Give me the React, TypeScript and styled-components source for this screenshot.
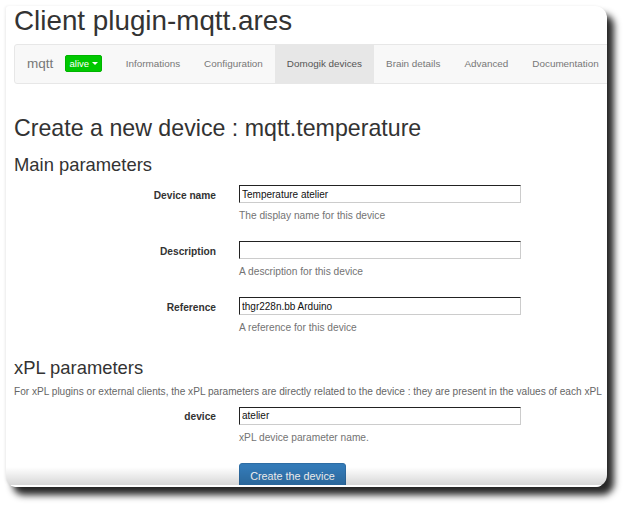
import React from 'react';
import styled, { createGlobalStyle } from 'styled-components';

const GlobalStyle = createGlobalStyle`
  html, body {
    margin: 0;
    padding: 0;
    background: #fff;
    font-family: "Liberation Sans", Arial, sans-serif;
  }
`;

const Page = styled.div`
  width: 630px;
  height: 511px;
  padding: 6px 0 0 6px;
  box-sizing: border-box;
`;

const Frame = styled.div`
  position: relative;
  width: 601px;
  height: 481px;
  background: #fff;
  border-radius: 3px 12px 12px 10px;
  box-shadow: 7px 8px 7px rgba(0, 0, 0, 0.85), -1px 0 3px rgba(0, 0, 0, 0.07);
  overflow: hidden;
  &::after {
    content: '';
    position: absolute;
    left: 0;
    right: 0;
    bottom: 0;
    height: 20px;
    background: linear-gradient(to bottom, rgba(0, 0, 0, 0) 0%, rgba(0, 0, 0, 0.16) 92%, #fff 92%);
    pointer-events: none;
  }
`;

const Content = styled.div`
  width: 640px;
  padding-left: 8px;
  color: #333;
`;

const Title = styled.h1`
  margin: 0;
  font-size: 27.8px;
  font-weight: 400;
  line-height: 1.1;
  color: #333;
`;

const Navbar = styled.nav`
  margin-top: 7px;
  height: 38px;
  display: flex;
  align-items: stretch;
  background: #f8f8f8;
  border: 1px solid #e7e7e7;
  border-radius: 3px;
`;

const Brand = styled.div`
  display: flex;
  align-items: center;
  padding: 0 12px;
  font-size: 13.5px;
  color: #777;
`;

const StatusButton = styled.div`
  align-self: center;
  display: flex;
  align-items: center;
  justify-content: center;
  gap: 3px;
  width: 37px;
  height: 17px;
  box-sizing: border-box;
  margin-right: 11.5px;
  background: #00c800;
  border: 1px solid #00b400;
  border-radius: 2px;
  color: #fff;
  font-size: 9.5px;
`;

const Caret = styled.span`
  width: 0;
  height: 0;
  border-left: 3px solid transparent;
  border-right: 3px solid transparent;
  border-top: 3px solid #fff;
`;

const NavItem = styled.div<{ $active?: boolean }>`
  display: flex;
  align-items: center;
  padding: 0 12px;
  font-size: 9.9px;
  color: ${p => (p.$active ? '#555' : '#777')};
  background: ${p => (p.$active ? '#e7e7e7' : 'transparent')};
  white-space: nowrap;
`;

const PageHeading = styled.h2`
  margin: 32px 0 0;
  font-size: 23.2px;
  font-weight: 400;
  line-height: 1.1;
`;

const Section = styled.h3<{ $top: number }>`
  margin: ${p => p.$top}px 0 0;
  font-size: 18.4px;
  font-weight: 400;
  line-height: 1.1;
`;

const Intro = styled.p`
  margin: 5px 0 0;
  font-size: 10.1px;
  line-height: 15px;
  color: #666;
  white-space: nowrap;
`;

const Row = styled.div<{ $top: number }>`
  display: grid;
  grid-template-columns: 202px 282px;
  column-gap: 23px;
  margin-top: ${p => p.$top}px;
`;

const Label = styled.label`
  grid-row: 1;
  align-self: center;
  padding-top: 2px;
  text-align: right;
  font-size: 10.2px;
  font-weight: 700;
  color: #333;
`;

const Input = styled.input`
  grid-column: 2;
  height: 18px;
  box-sizing: border-box;
  margin: 0;
  padding: 0 2px;
  border: 1px solid;
  border-color: #222 #ccc #ccc #222;
  font-family: "Liberation Sans", Arial, sans-serif;
  font-size: 10px;
  color: #111;
  background: #fff;
  outline: none;
`;

const Help = styled.div`
  grid-column: 2;
  margin-top: 5px;
  font-size: 10.2px;
  line-height: 15px;
  color: #737373;
`;

const Actions = styled.div`
  margin: 18px 0 0 225px;
`;

const PrimaryButton = styled.button`
  width: 107px;
  height: 26px;
  padding: 0;
  background: #337ab7;
  border: 1px solid #2e6da4;
  border-radius: 3px;
  color: #fff;
  font-family: "Liberation Sans", Arial, sans-serif;
  font-size: 10.8px;
`;

const navItems = ['Informations', 'Configuration', 'Domogik devices', 'Brain details', 'Advanced', 'Documentation'];

const mainFields = [
  { label: 'Device name', value: 'Temperature atelier', help: 'The display name for this device' },
  { label: 'Description', value: '', help: 'A description for this device' },
  { label: 'Reference', value: 'thgr228n.bb Arduino', help: 'A reference for this device' },
];

export default function App() {
  return (
    <Page>
      <GlobalStyle />
      <Frame>
        <Content>
          <Title>Client plugin-mqtt.ares</Title>
          <Navbar>
            <Brand>mqtt</Brand>
            <StatusButton>alive <Caret /></StatusButton>
            {navItems.map(item => (
              <NavItem key={item} $active={item === 'Domogik devices'}>{item}</NavItem>
            ))}
          </Navbar>

          <PageHeading>Create a new device : mqtt.temperature</PageHeading>
          <Section $top={14}>Main parameters</Section>

          {mainFields.map((f, i) => (
            <Row key={f.label} $top={i === 0 ? 10 : 18}>
              <Label>{f.label}</Label>
              <Input defaultValue={f.value} readOnly />
              <Help>{f.help}</Help>
            </Row>
          ))}

          <Section $top={23}>xPL parameters</Section>
          <Intro>For xPL plugins or external clients, the xPL parameters are directly related to the device : they are present in the values of each xPL</Intro>
          <Row $top={8}>
            <Label>device</Label>
            <Input defaultValue="atelier" readOnly />
            <Help>xPL device parameter name.</Help>
          </Row>
          <Actions>
            <PrimaryButton>Create the device</PrimaryButton>
          </Actions>
        </Content>
      </Frame>
    </Page>
  );
}
